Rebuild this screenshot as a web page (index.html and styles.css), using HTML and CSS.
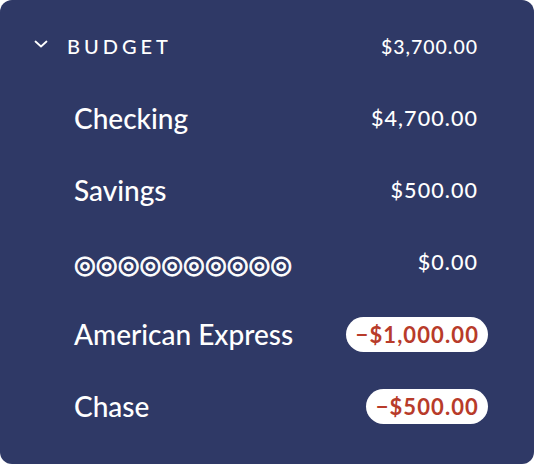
FILE: index.html
```html
<!DOCTYPE html>
<html lang="en">
<head>
    <meta charset="UTF-8">
    <title>Budget</title>
    <link rel="stylesheet" href="styles.css">
</head>
<body>
    <div class="panel">
        <div class="group-header">
            <svg class="chevron" width="14" height="8" viewBox="0 0 14 8">
                <path d="M1.5 1.5 L7 6.5 L12.5 1.5" fill="none" stroke="#fff" stroke-width="1.8" stroke-linecap="round" stroke-linejoin="round"/>
            </svg>
            <span class="group-name">BUDGET</span>
            <span class="group-total">$3,700.00</span>
        </div>

        <div class="account">
            <span class="account-name">Checking</span>
            <span class="amount">$4,700.00</span>
        </div>
        <div class="account">
            <span class="account-name">Savings</span>
            <span class="amount">$500.00</span>
        </div>
        <div class="account">
            <span class="account-name masked">◎◎◎◎◎◎◎◎◎◎</span>
            <span class="amount">$0.00</span>
        </div>
        <div class="account">
            <span class="account-name">American Express</span>
            <span class="amount negative">−$1,000.00</span>
        </div>
        <div class="account">
            <span class="account-name">Chase</span>
            <span class="amount negative">−$500.00</span>
        </div>
    </div>
</body>
</html>
```

FILE: styles.css
```css
* {
    margin: 0;
    padding: 0;
    box-sizing: border-box;
}

body {
    font-family: Lato, "Liberation Sans", sans-serif;
    background: #fff;
}

.panel {
    width: 534px;
    height: 464px;
    background: #2f3966;
    border-radius: 12px;
    color: #fff;
    padding: 10px 56px 0 34px;
}

.group-header {
    display: flex;
    align-items: center;
    height: 72px;
}

.chevron {
    margin-right: 19px;
    margin-bottom: 5px;
}

.group-name {
    font-size: 20px;
    font-weight: 500;
    letter-spacing: 0.2em;
    flex: 1;
}

.group-total {
    font-size: 19.5px;
    font-weight: 500;
    letter-spacing: 0.05em;
}

.account {
    display: flex;
    align-items: center;
    justify-content: space-between;
    height: 72px;
    padding-left: 40px;
}

.account-name {
    font-size: 28px;
    font-weight: 500;
}

.account-name.masked {
    font-family: "DejaVu Sans", sans-serif;
    font-size: 25px;
    font-weight: bold;
    -webkit-text-stroke: 0.9px #fff;
    padding-top: 4px;
}

.amount {
    font-size: 21.5px;
    font-weight: 500;
    letter-spacing: 0.05em;
}

.amount.negative {
    background: #fff;
    color: #b83b2a;
    font-size: 22px;
    font-weight: bold;
    border-radius: 18px;
    padding: 4px 9px 4px 10px;
    margin-right: -10px;
}
```
